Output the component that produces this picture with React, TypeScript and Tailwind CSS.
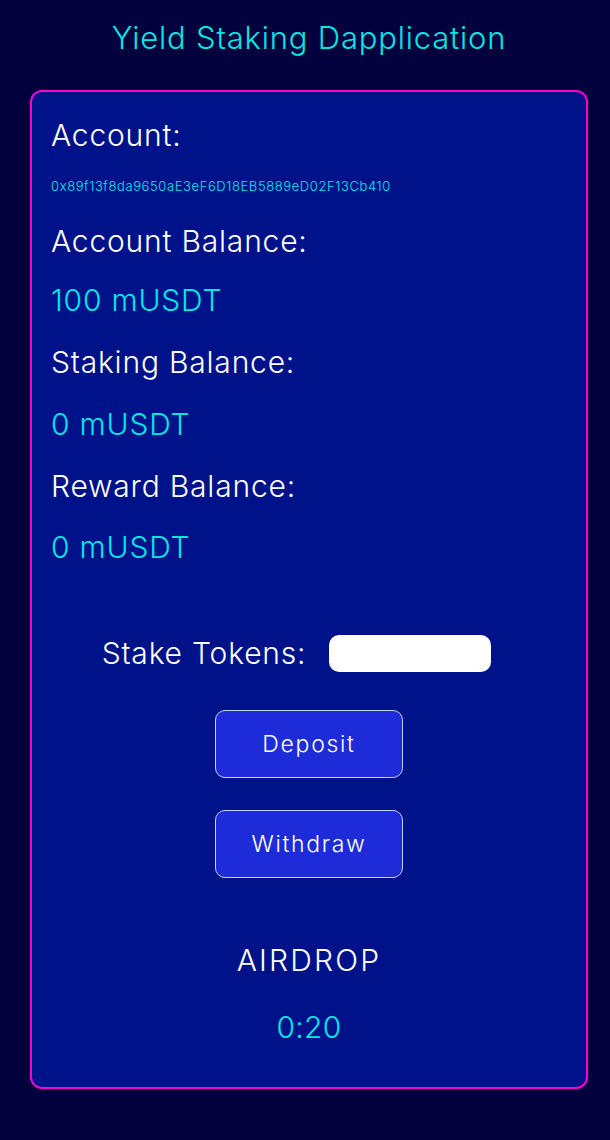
import React from "react";

export default function App() {
  const font = { fontFamily: "Inter, 'Noto Sans', sans-serif" };
  const label = "text-[30px] tracking-[0.8px] text-white font-light";
  const value = "text-[30px] tracking-[0.8px] text-[#00e8e4] font-light";
  const btn =
    "w-[188px] h-[68px] bg-[#1e2bd8] border border-[#c8d0ff] rounded-[10px] text-white text-[23px] tracking-[1.7px] font-light";
  return (
    <div
      className="min-h-[1140px] w-full bg-[#02003d] flex flex-col items-center pl-[8px]"
      style={font}
    >
      <div className="h-[76px] flex items-center justify-center text-[31px] tracking-[0.8px] text-[#00e8e4] font-light">
        Yield Staking Dapplication
      </div>
      <div className="mt-[14px] w-[558px] h-[999px] border-2 border-[#ff00d0] rounded-[12px] bg-[#00128a] flex flex-col px-[19px] pt-[17px]">
        <div className={`h-[52px] flex items-center ${label}`}>Account:</div>
        <div className="h-[52px] flex items-center text-[13px] tracking-[0.6px] text-[#00e8e4] font-light">
          0x89f13f8da9650aE3eF6D18EB5889eD02F13Cb410
        </div>
        <div className={`h-[57px] flex items-center ${label}`}>Account Balance:</div>
        <div className={`h-[61px] flex items-center ${value}`}>100 mUSDT</div>
        <div className={`h-[62px] flex items-center ${label}`}>Staking Balance:</div>
        <div className={`h-[62px] flex items-center ${value}`}>0 mUSDT</div>
        <div className={`h-[62px] flex items-center ${label}`}>Reward Balance:</div>
        <div className={`h-[60px] flex items-center ${value}`}>0 mUSDT</div>

        <div className="mt-[51px] h-[50px] flex items-center justify-center gap-[23px] pr-[25px]">
          <span className={label}>Stake Tokens:</span>
          <input className="w-[162px] h-[37px] bg-white rounded-[10px] outline-none" />
        </div>

        <div className="mt-[32px] flex justify-center">
          <button className={btn}>Deposit</button>
        </div>
        <div className="mt-[32px] flex justify-center">
          <button className={btn}>Withdraw</button>
        </div>

        <div className="mt-[57px] h-[50px] flex items-center justify-center text-[30px] tracking-[2.2px] text-white font-light">
          AIRDROP
        </div>
        <div className="mt-[17px] h-[50px] flex items-center justify-center text-[30px] tracking-[0.3px] text-[#00e8e4] font-light">
          0:20
        </div>
      </div>
    </div>
  );
}
